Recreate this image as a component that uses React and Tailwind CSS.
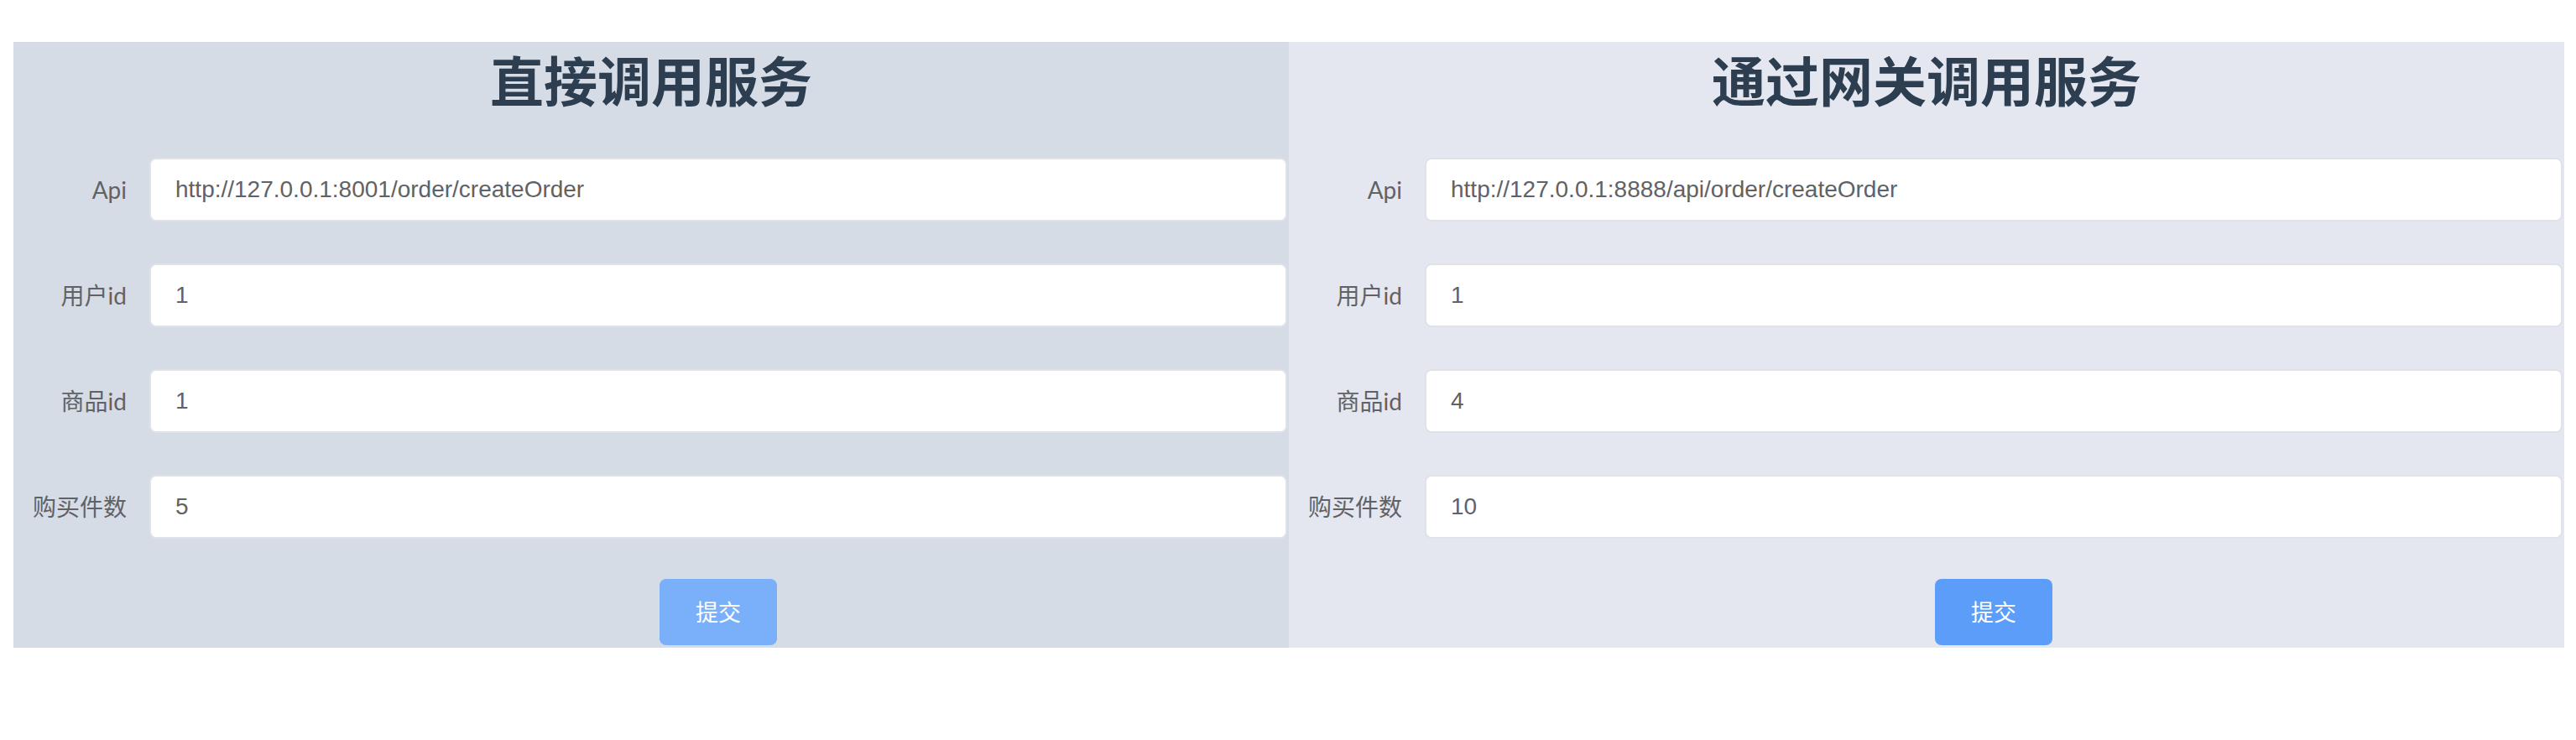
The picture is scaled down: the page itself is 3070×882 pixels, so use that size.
import React, { useState } from "react"

const cjk = '"Noto Sans CJK SC", sans-serif'
const labelFont = 'Lato, "Noto Sans CJK SC", sans-serif'
const inputFont = '"Liberation Sans", Arial, "Noto Sans CJK SC", sans-serif'

function Panel({ title, bg, btn, initial }) {
  const [form, setForm] = useState(initial)
  const fields = [
    { key: "api", label: "Api" },
    { key: "userId", label: "用户id" },
    { key: "goodsId", label: "商品id" },
    { key: "count", label: "购买件数" },
  ]

  return (
    <div className={`w-[1520px] shrink-0 ${bg} pb-[3px]`}>
      {/* Title */}
      <div className="h-[86px] flex items-center justify-center">
        <h1
          className="text-[64px] font-bold text-[#2c3e50] leading-none"
          style={{ fontFamily: cjk }}
        >
          {title}
        </h1>
      </div>

      {/* Form */}
      <div className="mt-[52px] flex flex-col gap-[50px]">
        {fields.map((f) => (
          <div key={f.key} className="flex items-center">
            <label
              className="w-[162px] shrink-0 pr-[27px] text-right text-[28px] text-[#606266]"
              style={{ fontFamily: labelFont }}
            >
              {f.label}
            </label>
            <input
              value={form[f.key]}
              onChange={(e) => setForm({ ...form, [f.key]: e.target.value })}
              className="w-[1356px] h-[76px] bg-white border-2 border-[#dfe2e9] rounded-[8px] pl-[29px] text-[28px] text-[#606266] outline-none"
              style={{ fontFamily: inputFont }}
            />
          </div>
        ))}
      </div>

      <div className="mt-[48px] flex pl-[162px] pr-[2px]">
        <div className="w-full flex justify-center">
          <button
            className={`w-[140px] h-[79px] rounded-[8px] ${btn} text-white text-[27px]`}
            style={{ fontFamily: cjk }}
          >
            提交
          </button>
        </div>
      </div>
    </div>
  )
}

export default function App() {
  return (
    <div className="w-[3070px] h-[882px] bg-white pt-[50px] pl-[16px]">
      <div className="flex">
        <Panel
          title="直接调用服务"
          bg="bg-[#d5dce6]"
          btn="bg-[#79b0f9]"
          initial={{ api: "http://127.0.0.1:8001/order/createOrder", userId: "1", goodsId: "1", count: "5" }}
        />
        <Panel
          title="通过网关调用服务"
          bg="bg-[#e4e7f0]"
          btn="bg-[#5b9df9]"
          initial={{ api: "http://127.0.0.1:8888/api/order/createOrder", userId: "1", goodsId: "4", count: "10" }}
        />
      </div>
    </div>
  )
}
